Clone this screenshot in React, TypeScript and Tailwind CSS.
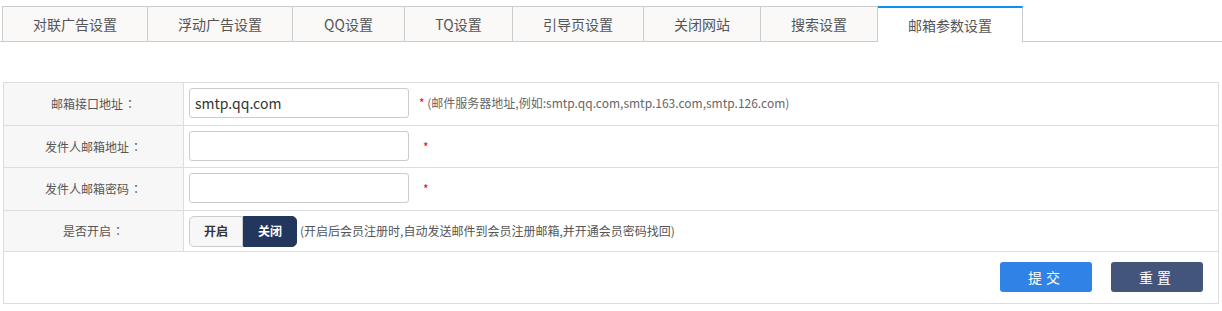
import { useState } from "react";

const tabs = [
  { label: "对联广告设置", w: "w-[146px] border-l" },
  { label: "浮动广告设置", w: "w-[145px]" },
  { label: "QQ设置", w: "w-[112px]" },
  { label: "TQ设置", w: "w-[108px]" },
  { label: "引导页设置", w: "w-[131px]" },
  { label: "关闭网站", w: "w-[117px]" },
  { label: "搜索设置", w: "w-[117px]" },
  { label: "邮箱参数设置", w: "w-[145px]" },
];

function Required({ className = "" }: { className?: string }) {
  return <span className={`text-[#f00] ${className}`}>*</span>;
}

function Label({ text }: { text: string }) {
  return (
    <div className="w-[180px] bg-[#f7f7f7] border-r border-[#ddd] flex items-center justify-center">
      {text}
      <span className="ml-[1px]" style={{ fontFamily: '"Noto Sans CJK TC", sans-serif' }}>
        ：
      </span>
    </div>
  );
}

export default function App() {
  const [active, setActive] = useState(7);
  const [enabled, setEnabled] = useState(false);
  const [host, setHost] = useState("smtp.qq.com");

  return (
    <div
      className="w-[1222px] h-[311px] bg-white text-[#555]"
      style={{ fontFamily: '"Microsoft YaHei", "Noto Sans CJK SC", sans-serif' }}
    >
      {/* 탭 */}
      <div className="pt-[6px]">
        <ul className="flex border-b border-[#ccc] pl-[2px] h-[36px]">
          {tabs.map((t, i) =>
            i === active ? (
              <li
                key={t.label}
                onClick={() => setActive(i)}
                className={`${t.w} h-[36px] border-t-2 border-t-[#0a91f6] border-r border-[#ccc] bg-white flex items-center justify-center text-[14px] leading-none cursor-pointer`}
              >
                {t.label}
              </li>
            ) : (
              <li
                key={t.label}
                onClick={() => setActive(i)}
                className={`${t.w} h-[35px] border-t border-r border-[#ccc] bg-[#faf9f8] flex items-center justify-center text-[14px] leading-none cursor-pointer`}
              >
                {t.label}
              </li>
            )
          )}
        </ul>
      </div>

      {/* 폼 테이블 */}
      <div className="mt-[40px] ml-[3px] w-[1216px] border border-[#ddd] text-[12px]">
        <div className="flex h-[43px] border-b border-[#ddd]">
          <Label text="邮箱接口地址" />
          <div className="flex items-start pt-[5px] pl-[5px]">
            <input
              value={host}
              onChange={(e) => setHost(e.target.value)}
              className="w-[220px] h-[30px] border border-[#ccc] rounded-[3px] px-[5px] text-[14px] text-[#333] outline-none"
            />
            <span className="ml-[10px] mt-[6px] text-[#666]">
              <Required /> (邮件服务器地址,例如:smtp.qq.com,smtp.163.com,smtp.126.com)
            </span>
          </div>
        </div>

        <div className="flex h-[42px] border-b border-[#ddd]">
          <Label text="发件人邮箱地址" />
          <div className="flex items-start pt-[5px] pl-[5px]">
            <input className="w-[220px] h-[30px] border border-[#ccc] rounded-[3px] px-[5px] text-[14px] outline-none" />
            <Required className="ml-[14px] mt-[7px]" />
          </div>
        </div>

        <div className="flex h-[43px] border-b border-[#ddd]">
          <Label text="发件人邮箱密码" />
          <div className="flex items-start pt-[5px] pl-[5px]">
            <input
              type="password"
              className="w-[220px] h-[30px] border border-[#ccc] rounded-[3px] px-[5px] text-[14px] outline-none"
            />
            <Required className="ml-[14px] mt-[7px]" />
          </div>
        </div>

        <div className="flex h-[41px] border-b border-[#ddd]">
          <Label text="是否开启" />
          <div className="flex items-center pl-[5px]">
            <div className="flex h-[31px]">
              <button
                onClick={() => setEnabled(true)}
                className={`w-[54px] rounded-l-[5px] font-bold border ${
                  enabled ? "bg-[#22365e] text-white border-[#22365e]" : "bg-[#f7f7f7] text-[#333] border-[#ccc]"
                }`}
              >
                开启
              </button>
              <button
                onClick={() => setEnabled(false)}
                className={`w-[54px] rounded-r-[5px] font-bold border ${
                  !enabled ? "bg-[#22365e] text-white border-[#22365e]" : "bg-[#f7f7f7] text-[#333] border-[#ccc]"
                }`}
              >
                关闭
              </button>
            </div>
            <span className="ml-[3px]">(开启后会员注册时,自动发送邮件到会员注册邮箱,并开通会员密码找回)</span>
          </div>
        </div>

        <div className="flex h-[51px] items-start pt-[10px] justify-end pr-[15px] gap-[19px]">
          <button className="w-[92px] h-[30px] rounded-[3px] bg-[#2f83e6] text-white text-[14px] tracking-[4px]">
            提交
          </button>
          <button className="w-[92px] h-[30px] rounded-[3px] bg-[#44557b] text-white text-[14px] tracking-[4px]">
            重置
          </button>
        </div>
      </div>
    </div>
  );
}
